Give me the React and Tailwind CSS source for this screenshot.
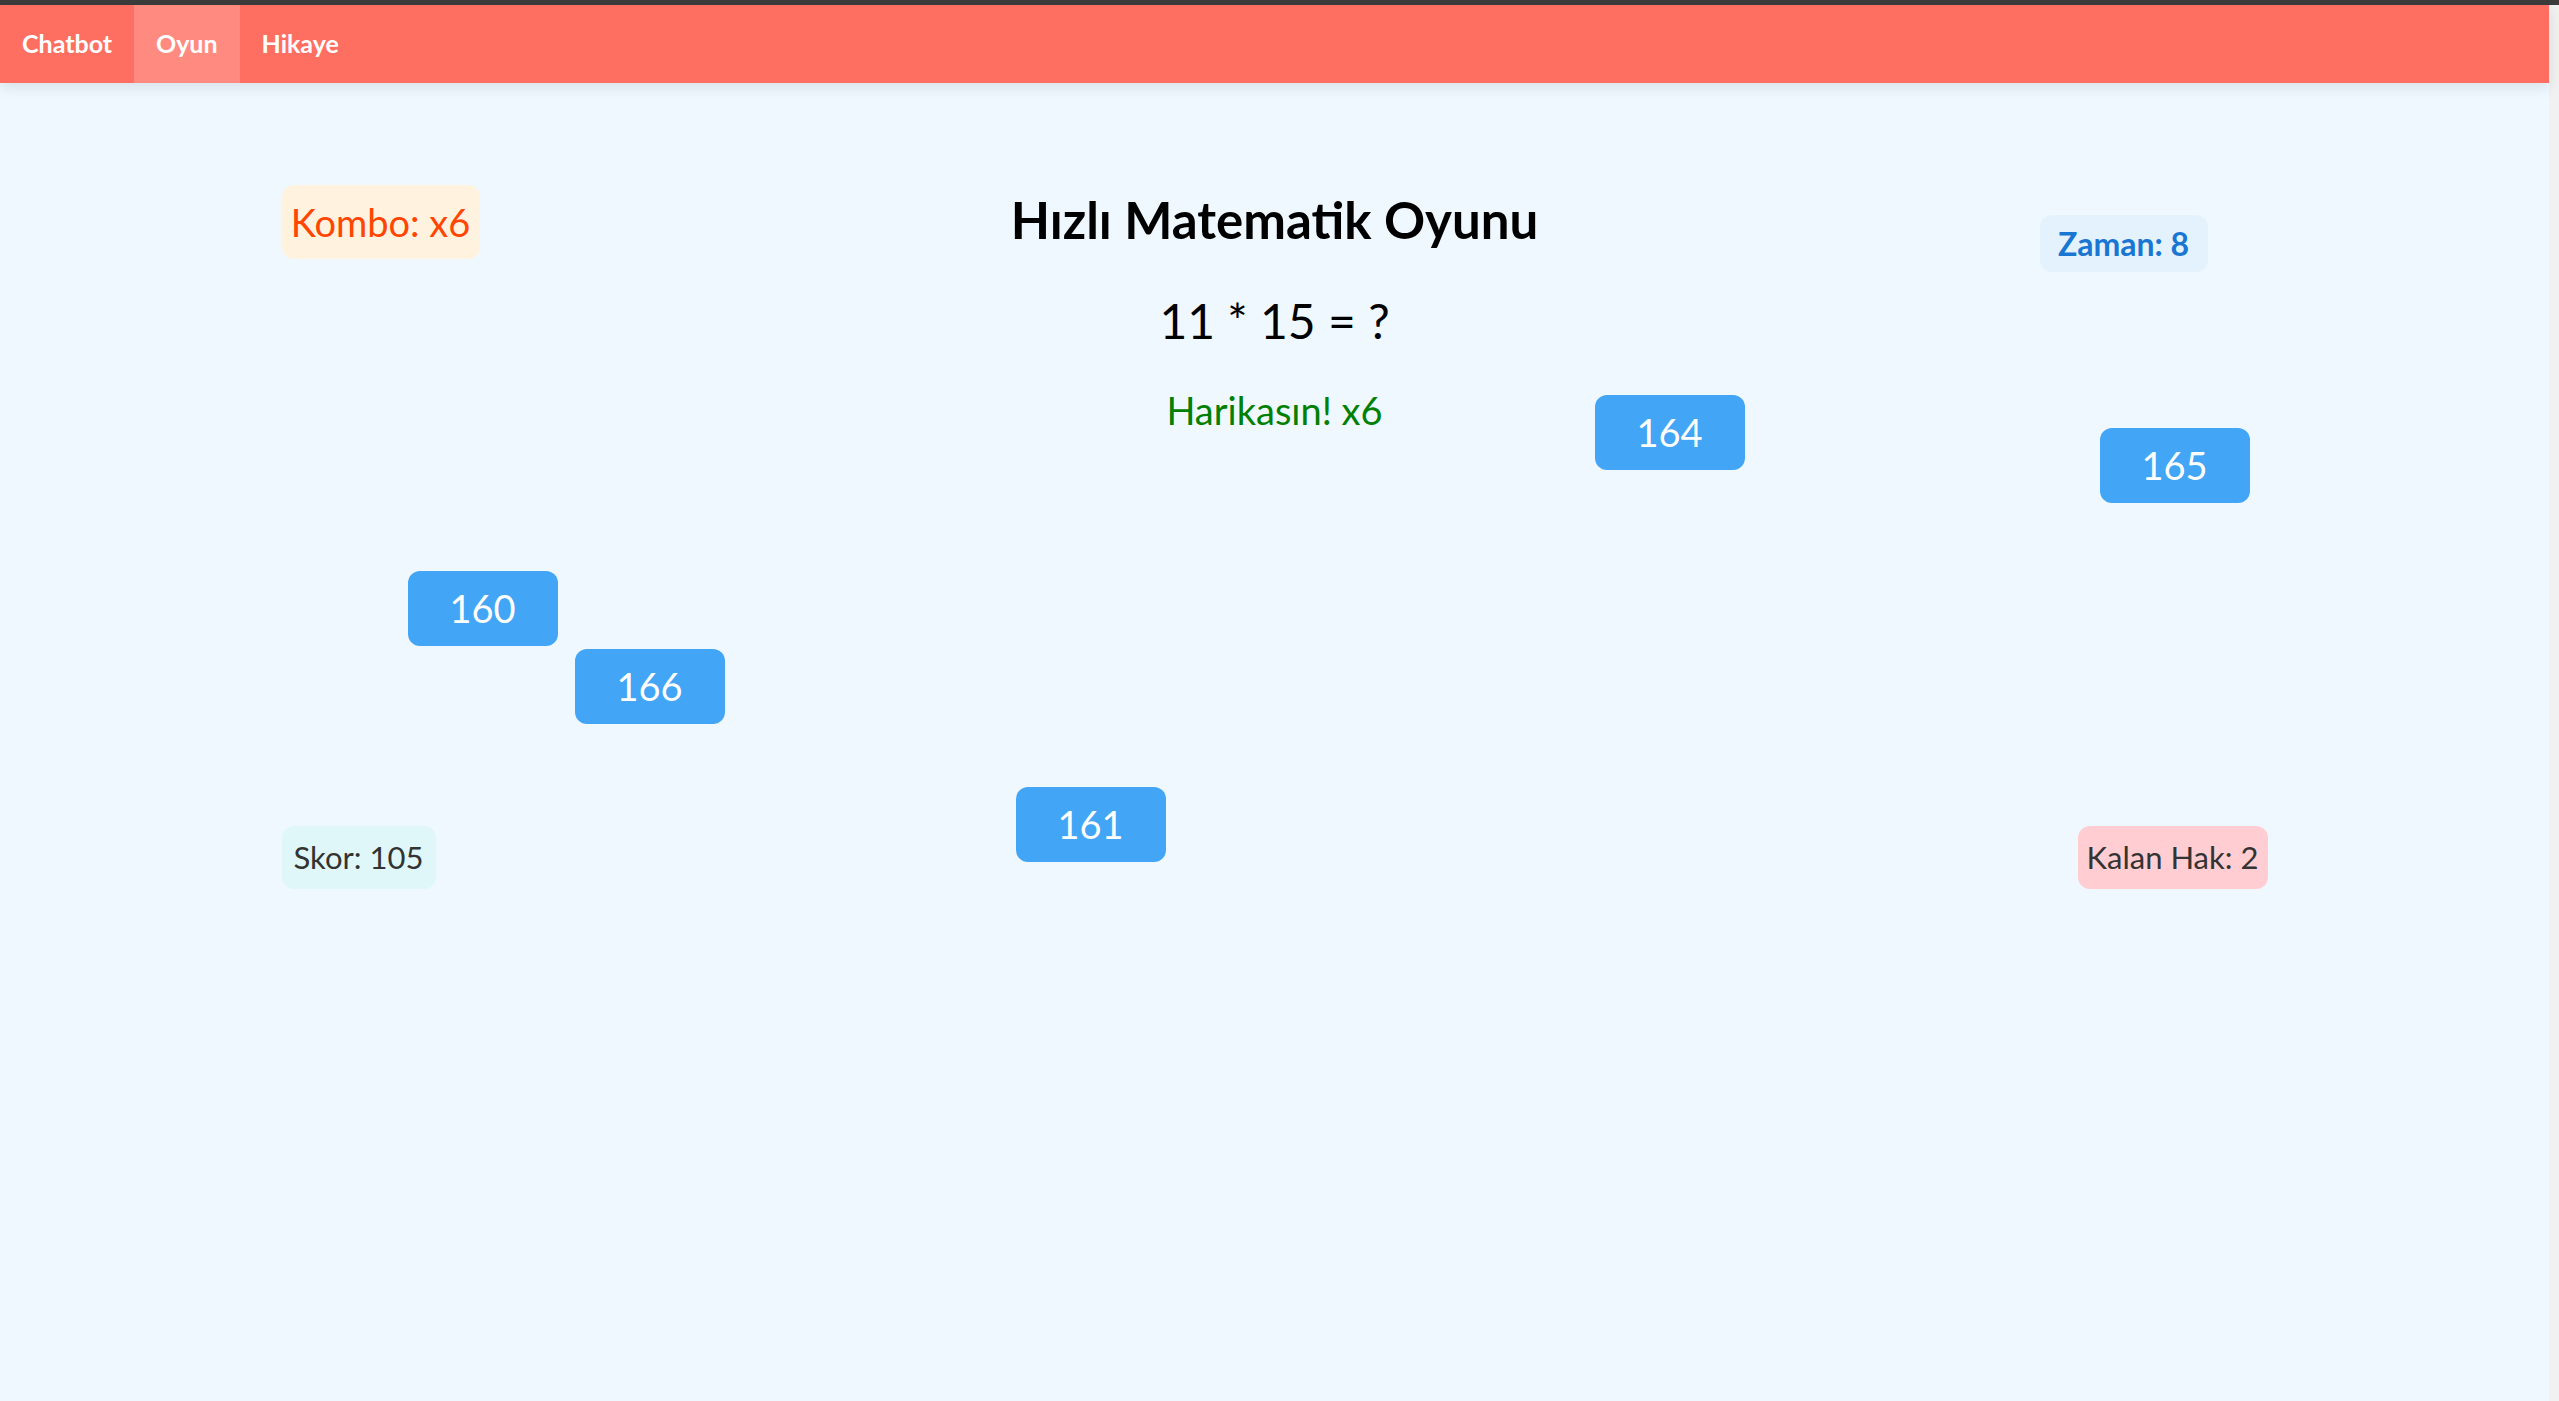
import { useState } from 'react';

const font = { fontFamily: '"Comic Sans MS", Lato, "Open Sans", sans-serif' };

const answers = [
  { value: 160, left: 126, top: 488 },
  { value: 166, left: 293, top: 566 },
  { value: 164, left: 1313, top: 312 },
  { value: 165, left: 1818, top: 345 },
  { value: 161, left: 734, top: 704 },
];

export default function App() {
  const [tab, setTab] = useState('Oyun');

  return (
    <div className="min-h-[1401px] bg-[#f0f8ff] flex flex-col" style={font}>
      <div className="h-[5px] bg-[#3c3c3c]" />
      <div className="flex flex-1">
        <div className="flex-1 flex flex-col">
          <nav className="h-[78px] bg-[#ff6f61] flex shadow-[0_4px_14px_rgba(0,0,0,0.1)] relative z-10">
            {['Chatbot', 'Oyun', 'Hikaye'].map((item) => (
              <button
                key={item}
                onClick={() => setTab(item)}
                className={`px-[22px] h-full text-white font-bold text-[25px] ${
                  tab === item ? 'bg-[#ff8a7f]' : ''
                }`}
              >
                {item}
              </button>
            ))}
          </nav>

          <div className="relative mx-auto w-[1986px] pt-[102px]">
            <div className="grid grid-cols-[1fr_auto_1fr] items-start">
              <div className="justify-self-start w-[198px] h-[74px] rounded-[12px] bg-[#fff3e0] text-[#ff4500] text-[38px] whitespace-nowrap flex items-center justify-center">
                Kombo: x6
              </div>
              <div className="text-center text-black">
                <h1 className="mt-[5px] text-[51px] leading-[60px] font-bold">Hızlı Matematik Oyunu</h1>
                <p className="mt-[41px] text-[48px] leading-[60px]">11 * 15 = ?</p>
                <p className="mt-[37px] text-[38px] leading-[44px] text-[#008000]">Harikasın! x6</p>
              </div>
              <div className="justify-self-end mr-[60px] mt-[30px] w-[168px] h-[57px] rounded-[12px] bg-[#e3f2fd] text-[#1976d2] text-[32px] font-bold whitespace-nowrap flex items-center justify-center">
                Zaman: 8
              </div>
            </div>

            <div className="mt-[394px] flex justify-between text-[#333] text-[31px]">
              <div className="w-[154px] h-[63px] rounded-[12px] bg-[#e0f7fa] whitespace-nowrap flex items-center justify-center">
                Skor: 105
              </div>
              <div className="w-[190px] h-[63px] rounded-[12px] bg-[#ffcdd2] whitespace-nowrap flex items-center justify-center">
                Kalan Hak: 2
              </div>
            </div>

            {answers.map((a) => (
              <button
                key={a.value}
                className="absolute w-[150px] h-[75px] rounded-[12px] bg-[#42a5f5] text-white text-[38px] flex items-center justify-center"
                style={{ left: a.left, top: a.top }}
              >
                {a.value}
              </button>
            ))}
          </div>
        </div>
        <div className="w-[10px] bg-[#f1f1f1]" />
      </div>
    </div>
  );
}
